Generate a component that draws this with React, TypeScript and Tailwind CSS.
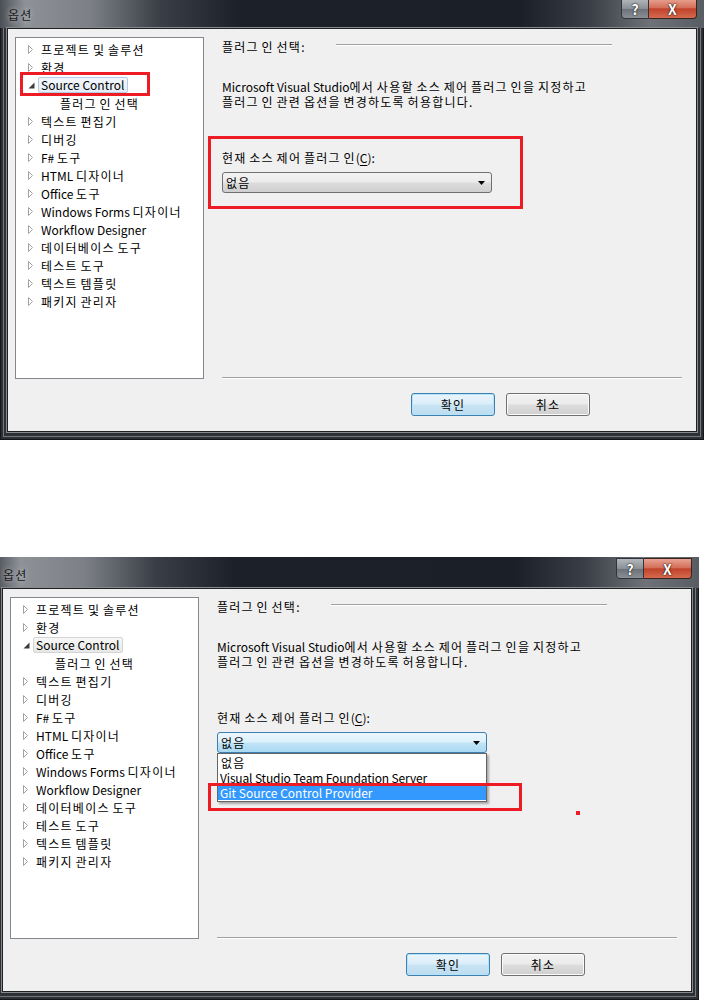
import React from 'react'

const treeItems = [
  '프로젝트 및 솔루션',
  '환경',
  'Source Control',
  '플러그 인 선택',
  '텍스트 편집기',
  '디버깅',
  'F# 도구',
  'HTML 디자이너',
  'Office 도구',
  'Windows Forms 디자이너',
  'Workflow Designer',
  '데이터베이스 도구',
  '테스트 도구',
  '텍스트 템플릿',
  '패키지 관리자',
]

// Malgun Gothic sets hangul a little wider than Noto CJK, so hangul runs get extra tracking
function K({ children }: { children: string }) {
  const parts = children.split(/([\uAC00-\uD7A3]+)/)
  return (
    <>
      {parts.map((p, i) =>
        i % 2 === 1 ? (
          <span key={i} className="tracking-[1.25px]">
            {p}
          </span>
        ) : (
          p
        )
      )}
    </>
  )
}

function Arrow({ open }: { open?: boolean }) {
  if (open)
    return (
      <svg width="7" height="7" viewBox="0 0 7 7">
        <path d="M6.5 0.5V6.5H0.5Z" fill="#3c3c3c" />
      </svg>
    )
  return (
    <svg width="6" height="9" viewBox="0 0 6 9">
      <path d="M0.5 0.5L4.5 4.5L0.5 8.5Z" fill="#fff" stroke="#a2a2a2" />
    </svg>
  )
}

function Tree({ focused }: { focused: boolean }) {
  return (
    <div className="ml-[7px] mt-[8px] h-[342px] w-[189px] shrink-0 border border-[#828790] bg-white pt-[2px]">
      {treeItems.map((item, i) => {
        const isSub = i === 3
        const isSel = item === 'Source Control'
        return (
          <div key={item} className="flex h-[18px] items-center whitespace-nowrap">
            {isSub ? (
              <div className="w-[44px]" />
            ) : (
              <div className="flex w-[25px] items-center pl-[12px]">
                <Arrow open={isSel} />
              </div>
            )}
            {isSel ? (
              <span
                className={
                  focused
                    ? 'ml-[-3px] rounded-[2px] border border-[#b5cbe4] bg-[linear-gradient(#f3f7fc,#e4edf8)] pl-[2px] pr-[3px] leading-[14px]'
                    : 'ml-[-3px] rounded-[2px] border border-[#d4d4d4] bg-[linear-gradient(#f7f7f7,#e8e8e8)] pl-[2px] pr-[3px] leading-[14px]'
                }
              >
                {item}
              </span>
            ) : (
              <span className="leading-[15px]">
                <K>{item}</K>
              </span>
            )}
          </div>
        )
      })}
    </div>
  )
}

function CaptionButtons() {
  return (
    <div className="mr-[7px] mt-[1px] flex h-[21px]">
      <div className="flex w-[28px] items-center justify-center rounded-bl-[4px] border border-[#30343a] bg-[linear-gradient(#b4b8bd,#8b9096_50%,#6b7077_51%,#8a8f95)] text-[14px] font-bold leading-none text-white [text-shadow:0_0_2px_#222,0_0_1px_#000]">
        ?
      </div>
      <div className="flex w-[48px] items-center justify-center rounded-br-[4px] border border-l-0 border-[#3a2420] bg-[linear-gradient(#e8a392,#d4705a_45%,#c0432b_52%,#d56a4f)] text-[14px] font-bold leading-none text-white [text-shadow:0_0_2px_#3a1008,0_0_1px_#000]">
        X
      </div>
    </div>
  )
}

function Dialog({ open }: { open: boolean }) {
  return (
    <div className="relative flex h-[443px] w-[704px] shrink-0 flex-col bg-[#2d3136] shadow-[inset_0_0_0_1px_#15171a,inset_0_0_0_3px_#2d3136,inset_0_0_0_4px_#74787d]">
      {/* title bar */}
      <div className="flex h-[31px] shrink-0 items-start justify-between bg-[linear-gradient(90deg,#4a4f56_0px,#8e9297_25px,#7c8086_90px,#3a3f47_160px,#1c2129_240px,#1b2028_520px,#3a3f47_590px,#6e7278_650px,#585d63_704px)]">
        <span className="ml-[8px] mt-[10px] text-[12px] leading-[15px] text-[#1a1a1a] [text-shadow:0_0_5px_#c6c9cd]">
          <K>옵션</K>
        </span>
        <CaptionButtons />
      </div>

      {/* client area */}
      <div className="mx-[7px] flex h-[404px] shrink-0 border border-[#1e2124] bg-[#f0f0f0] shadow-[0_0_0_1px_#868a8f]">
        <Tree focused={!open} />

        <div className="flex flex-1 flex-col pl-[18px] pr-[14px] pt-[10px]">
          <div className="flex h-[16px] items-start">
            <span className="leading-[16px]">
              <K>플러그 인 선택:</K>
            </span>
            <div className="ml-auto mr-[70px] mt-[5px] h-[2px] w-[276px] border-t border-[#a0a0a0] bg-white" />
          </div>

          <p className="mt-[24px] leading-[15px]">
            <K>Microsoft Visual Studio에서 사용할 소스 제어 플러그 인을 지정하고</K>
            <br />
            <K>플러그 인 관련 옵션을 변경하도록 허용합니다.</K>
          </p>

          <div className="mt-[41px] leading-[15px]">
            <K>현재 소스 제어 플러그 인</K>(<span className="underline underline-offset-2">C</span>):
          </div>

          <div className="relative mt-[7px] w-[270px]">
            <div
              className={
                open
                  ? 'flex h-[21px] items-center rounded-[3px] border border-[#3c7fb1] bg-[linear-gradient(#ecf7fd,#dcf0fb_48%,#c1e5f7_52%,#a9d8f2)] pl-[3px] pr-[6px]'
                  : 'flex h-[21px] items-center rounded-[3px] border border-[#707070] bg-[linear-gradient(#f3f3f3,#ebebeb_48%,#dddddd_52%,#cfcfcf)] pl-[3px] pr-[6px]'
              }
            >
              <span className="flex-1 leading-[15px]">
                <K>없음</K>
              </span>
              <svg width="7" height="4" viewBox="0 0 7 4">
                <path d="M0 0H7L3.5 4Z" fill="#000" />
              </svg>
            </div>
            {open && (
              <div className="absolute left-0 top-full z-10 w-[270px] border border-[#646464] bg-white py-px shadow-[2px_2px_2px_rgba(0,0,0,0.3)]">
                <div className="px-[3px] leading-[15px]">
                  <K>없음</K>
                </div>
                <div className="px-[2px] leading-[15px] tracking-[-0.15px]">Visual Studio Team Foundation Server</div>
                <div className="bg-[#3399ff] px-[2px] leading-[15px] text-white">Git Source Control Provider</div>
              </div>
            )}
          </div>

          <div className="flex-1" />

          <div className="h-[2px] border-t border-[#a0a0a0] bg-white" />

          <div className="mb-[15px] mr-[92px] mt-[14px] flex justify-end gap-[11px]">
            <button className="h-[23px] w-[84px] rounded-[3px] border border-[#3c7fb1] bg-[linear-gradient(#eaf5fc,#dbeef9_48%,#c8e4f4_52%,#bcdcef)] leading-[15px] shadow-[inset_0_0_0_1px_#b6e4fb]">
              <K>확인</K>
            </button>
            <button className="h-[23px] w-[84px] rounded-[3px] border border-[#707070] bg-[linear-gradient(#f2f2f2,#ebebeb_48%,#dddddd_52%,#cfcfcf)] leading-[15px] shadow-[inset_0_0_0_1px_#fbfbfb]">
              <K>취소</K>
            </button>
          </div>
        </div>
      </div>

      {/* annotation marks */}
      {!open && (
        <>
          <div className="absolute left-[20px] top-[75px] h-[24px] w-[130px] border-[3px] border-[#ed1c24]" />
          <div className="absolute left-[208px] top-[139px] h-[73px] w-[315px] border-[3px] border-[#ed1c24]" />
        </>
      )}
      {open && (
        <>
          <div className="absolute left-[213px] top-[226px] z-20 h-[28px] w-[314px] border-[3px] border-[#ed1c24]" />
          <div className="absolute left-[581px] top-[254px] h-[4px] w-[4px] bg-[#ed1c24]" />
        </>
      )}
    </div>
  )
}

export default function App() {
  return (
    <div className="flex h-[1003px] w-[704px] flex-col overflow-hidden bg-white font-['Noto_Sans_CJK_KR',sans-serif] text-[12px] text-black">
      <div className="-mt-[3px]">
        <Dialog open={false} />
      </div>
      <div className="ml-[-5px] mt-[117px]">
        <Dialog open />
      </div>
    </div>
  )
}
